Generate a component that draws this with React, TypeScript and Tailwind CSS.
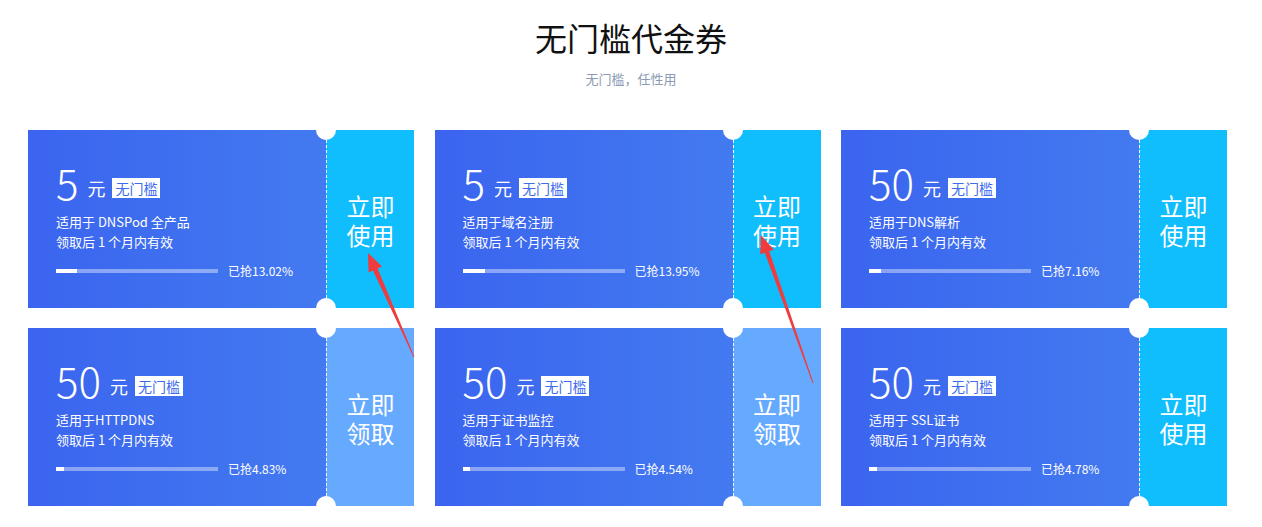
import React from 'react';

type Coupon = {
  amount: string;
  desc: string;
  percent: number;
  action: 'use' | 'get';
};

const coupons: Coupon[] = [
  { amount: '5', desc: '适用于 DNSPod 全产品', percent: 13.02, action: 'use' },
  { amount: '5', desc: '适用于域名注册', percent: 13.95, action: 'use' },
  { amount: '50', desc: '适用于DNS解析', percent: 7.16, action: 'use' },
  { amount: '50', desc: '适用于HTTPDNS', percent: 4.83, action: 'get' },
  { amount: '50', desc: '适用于证书监控', percent: 4.54, action: 'get' },
  { amount: '50', desc: '适用于 SSL证书', percent: 4.78, action: 'use' },
];

function CouponCard({ coupon }: { coupon: Coupon }) {
  return (
    <div className="relative flex h-[178px] w-[386px] text-white">
      <div className="flex w-[298px] flex-col bg-gradient-to-r from-[#3b64ef] to-[#437af0] pl-[28px] pt-[30px]">
        <div className="flex items-end">
          <span className="text-[42px] font-light leading-[44px]">{coupon.amount}</span>
          <span className="mb-[5px] ml-[9px] text-[18px] leading-[22px]">元</span>
          <span className="mb-[6px] ml-[7px] bg-white px-[3px] text-[14px] leading-[20px] text-[#3d6cef]">无门槛</span>
        </div>
        <div className="mt-[8px] text-[13px] leading-[20px]">
          <div>{coupon.desc}</div>
          <div>领取后 1 个月内有效</div>
        </div>
        <div className="mt-[11px] flex items-center">
          <div className="h-[4px] w-[162px] bg-white/40">
            <div className="h-full bg-white" style={{ width: `${coupon.percent}%` }} />
          </div>
          <span className="ml-[10px] text-[12px] leading-[16px]">已抢{coupon.percent.toFixed(2)}%</span>
        </div>
      </div>
      <div
        className={`flex flex-1 flex-col items-center justify-center border-l border-dashed border-white pt-[2px] text-center text-[24px] leading-[29px] ${
          coupon.action === 'use' ? 'bg-[#10bdfd]' : 'bg-[#66aaff]'
        }`}
      >
        <div>立即</div>
        <div>{coupon.action === 'use' ? '使用' : '领取'}</div>
      </div>
      <div className="absolute left-[288px] top-[-10px] h-[20px] w-[20px] rounded-full bg-white" />
      <div className="absolute bottom-[-10px] left-[288px] h-[20px] w-[20px] rounded-full bg-white" />
    </div>
  );
}

export default function App() {
  return (
    <div
      className="relative h-[527px] w-[1262px] overflow-hidden bg-white"
      style={{ fontFamily: '"Noto Sans CJK SC", "Noto Sans", sans-serif' }}
    >
      <div className="flex flex-col items-center">
        <h1 className="mt-[17px] text-[32px] font-normal leading-[40px] text-[#111]">无门槛代金券</h1>
        <p className="mt-[12px] text-[13px] leading-[20px] text-[#8c9ab3]">无门槛，任性用</p>
      </div>
      <div className="mt-[41px] grid grid-cols-[386px_386px_386px] gap-x-[20.5px] gap-y-[20px] pl-[28px]">
        {coupons.map((c, i) => (
          <CouponCard key={i} coupon={c} />
        ))}
      </div>
      <svg className="pointer-events-none absolute left-0 top-0" width="1262" height="527">
        <polygon
          fill="#f03c3c"
          points="368,253 382,266.5 377.6,268.5 414.5,357 413.5,357 373,270.5 368.6,272.5"
        />
        <polygon
          fill="#f03c3c"
          points="761,235 773.8,249.7 769.2,251.2 813.5,383 812.5,383 764.8,252.8 760.2,254.3"
        />
      </svg>
    </div>
  );
}
